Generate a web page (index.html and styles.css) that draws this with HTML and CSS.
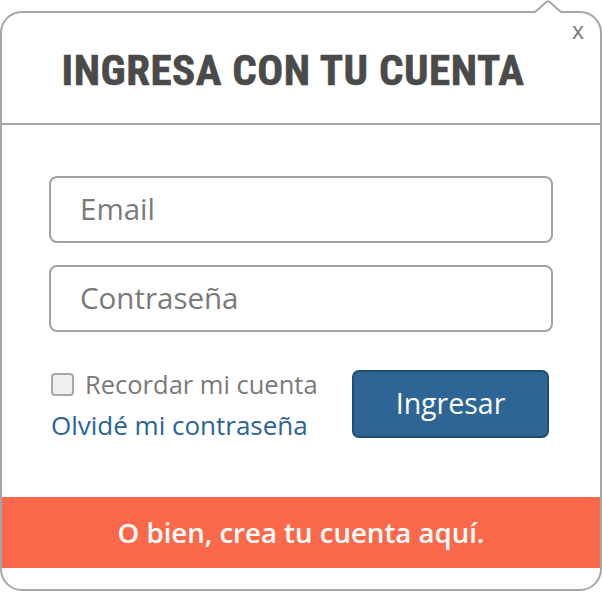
FILE: index.html
```html
<!DOCTYPE html>
<html lang="es">
<head>
<meta charset="utf-8">
<title>Ingresa con tu cuenta</title>
<link rel="stylesheet" href="styles.css">
</head>
<body>
<div class="popup">
  <svg class="notch" width="26" height="14" viewBox="0 0 26 14">
    <polygon points="0,13 13,1 26,13" fill="#fff"/>
    <polyline points="0,12 12,1.5 14,1.5 26,12" fill="none" stroke="#a6a6a6" stroke-width="2"/>
  </svg>
  <span class="close">x</span>
  <header class="head">
    <h1 class="title">INGRESA CON TU CUENTA</h1>
  </header>
  <form class="form">
    <input class="field" type="email" placeholder="Email">
    <input class="field" type="password" placeholder="Contraseña">
    <div class="row">
      <div class="left">
        <label class="remember"><span class="box"></span>Recordar mi cuenta</label>
        <a class="forgot" href="#">Olvidé mi contraseña</a>
      </div>
      <button class="submit" type="button">Ingresar</button>
    </div>
  </form>
  <div class="signup">O bien, crea tu cuenta aquí.</div>
</div>
</body>
</html>
```

FILE: styles.css
```css
* { box-sizing: border-box; }
html, body { margin: 0; padding: 0; background: #fff; }
body {
  width: 602px;
  height: 592px;
  padding-top: 11px;
  font-family: "Open Sans", "Noto Sans", sans-serif;
}
.popup {
  position: relative;
  width: 602px;
  height: 580px;
  border: 2px solid #a6a6a6;
  border-radius: 22px;
  display: flex;
  flex-direction: column;
}
.notch {
  position: absolute;
  top: -13px;
  left: 533px;
}
.close {
  position: absolute;
  top: 6px;
  right: 16px;
  font-size: 23px;
  color: #7a7a7a;
  line-height: 1;
}
.head {
  height: 112px;
  border-bottom: 2px solid #a6a6a6;
  display: flex;
  align-items: center;
  justify-content: center;
  padding: 5px 16px 0 0;
}
.title {
  margin: 0;
  font-family: "Liberation Sans Narrow", "Roboto Condensed", "DejaVu Sans Condensed", sans-serif;
  font-weight: 700;
  font-size: 43px;
  letter-spacing: 0.5px;
  color: #4a4a4a;
  line-height: 1;
  -webkit-text-stroke: 0.6px #4a4a4a;
}
.form {
  margin: 0;
  padding: 51px 47px 0 47px;
  display: flex;
  flex-direction: column;
  gap: 22px;
}
.field {
  width: 504px;
  height: 67px;
  border: 2px solid #a3a3a3;
  border-radius: 8px;
  padding: 0 0 2px 29px;
  font-family: inherit;
  font-size: 29.5px;
  color: #7a7a7a;
  background: #fff;
  outline: none;
}
.field::placeholder { color: #7a7a7a; opacity: 1; }
.row {
  margin-top: 16px;
  display: flex;
  justify-content: space-between;
  align-items: flex-start;
  padding-right: 4px;
}
.left {
  display: flex;
  flex-direction: column;
  padding-left: 2px;
}
.remember {
  display: flex;
  align-items: center;
  gap: 11px;
  font-size: 25.5px;
  color: #7a7a7a;
  line-height: 26px;
  margin-top: 1px;
}
.box {
  width: 23px;
  height: 23px;
  border: 2px solid #a8a8a8;
  border-radius: 4px;
  background: #efefef;
}
.forgot {
  margin-top: 14px;
  font-size: 26px;
  line-height: 28px;
  color: #2b6396;
  text-decoration: none;
}
.submit {
  width: 197px;
  height: 68px;
  background: #2d6594;
  border: 2px solid #214c72;
  border-radius: 7px;
  color: #fff;
  font-family: inherit;
  font-size: 28.5px;
  padding: 0 0 3px;
}
.signup {
  margin-top: 58px;
  height: 71px;
  background: #fc694a;
  color: #fff;
  font-weight: 600;
  font-size: 27.6px;
  display: flex;
  align-items: center;
  justify-content: center;
  padding-bottom: 2px;
}
```
